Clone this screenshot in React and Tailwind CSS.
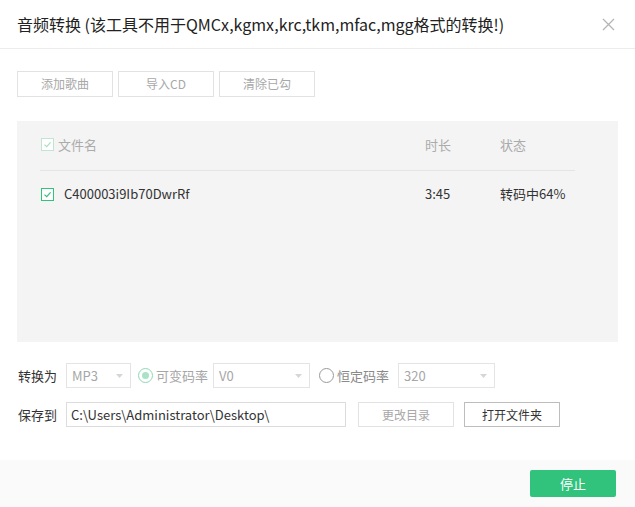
import React, { useState } from 'react';

const font = { fontFamily: '"Noto Sans CJK SC", "Noto Sans", sans-serif' };

const Check = ({ faded }) => (
  <span
    className={`flex h-[13px] w-[13px] items-center justify-center border bg-white ${
      faded ? 'border-[#bfe6d3]' : 'border-[#31c27c]'
    }`}
  >
    <svg width="9" height="9" viewBox="0 0 9 9">
      <path
        d="M1.5 4.6 L3.7 6.6 L7.6 2.4"
        fill="none"
        stroke={faded ? '#a9dfc4' : '#31c27c'}
        strokeWidth="1.2"
      />
    </svg>
  </span>
);

const Select = ({ value, w }) => (
  <div
    className={`flex h-[25px] ${w} items-center justify-between border border-[#e4e4e4] bg-white px-[5px] text-[13px] text-[#a6a6a6]`}
  >
    <span>{value}</span>
    <svg width="7" height="4" viewBox="0 0 7 4" className="mr-[2px]">
      <path d="M0 0 L7 0 L3.5 4 Z" fill="#d6d6d6" />
    </svg>
  </div>
);

const Radio = ({ on, label }) => (
  <label className="flex items-center gap-[3px] text-[13px] text-[#a6a6a6]">
    <span
      className={`flex h-[15px] w-[15px] items-center justify-center rounded-full border ${
        on ? 'border-[#8fd8b5]' : 'border-[#9a9a9a]'
      } bg-white`}
    >
      {on && <span className="h-[7px] w-[7px] rounded-full bg-[#a9e2c6]" />}
    </span>
    <span className={on ? 'text-[#a6a6a6]' : 'text-[#8a8a8a]'}>{label}</span>
  </label>
);

const App = () => {
  const [path] = useState('C:\\Users\\Administrator\\Desktop\\');

  return (
    <div className="flex h-[507px] w-[635px] flex-col bg-white text-[#333]" style={font}>
      <div className="flex h-[49px] items-center justify-between border-b border-[#ececec] pl-[17px] pr-[20px]">
        <h1 className="text-[16px] text-[#222]">
          音频转换 (该工具不用于QMCx,kgmx,krc,tkm,mfac,mgg格式的转换!)
        </h1>
        <svg width="13" height="13" viewBox="0 0 13 13">
          <path d="M1 1 L12 12 M12 1 L1 12" stroke="#b5b5b5" strokeWidth="1.3" />
        </svg>
      </div>

      <div className="flex gap-[5px] pl-[17px] pt-[22px]">
        {['添加歌曲', '导入CD', '清除已勾'].map((t) => (
          <button
            key={t}
            className="h-[26px] w-[96px] border border-[#e2e2e2] bg-white text-[12px] text-[#a8a8a8]"
          >
            {t}
          </button>
        ))}
      </div>

      <div className="mx-[17px] mt-[24px] h-[221px] bg-[#f4f4f4] pl-[23px]">
        <div className="flex h-[50px] w-[535px] items-end border-b border-[#e4e4e4] pb-[16px] text-[13px] text-[#ababab]">
          <div className="flex w-[385px] items-center gap-[4px] pl-[1px]">
            <Check faded />
            <span>文件名</span>
          </div>
          <div className="w-[75px]">时长</div>
          <div>状态</div>
        </div>
        <div className="flex h-[45px] w-[535px] items-center pt-[1px] text-[13px] text-[#333]">
          <div className="flex w-[385px] items-center gap-[10px] pl-[1px]">
            <Check />
            <span>C400003i9Ib70DwrRf</span>
          </div>
          <div className="w-[75px]">3:45</div>
          <div>转码中64%</div>
        </div>
      </div>

      <div className="mt-[21px] flex items-center pl-[18px] text-[13px]">
        <span className="w-[48px] text-[#333]">转换为</span>
        <Select value="MP3" w="w-[65px]" />
        <div className="ml-[7px]">
          <Radio on label="可变码率" />
        </div>
        <div className="ml-[5px]">
          <Select value="V0" w="w-[97px]" />
        </div>
        <div className="ml-[9px]">
          <Radio label="恒定码率" />
        </div>
        <div className="ml-[9px]">
          <Select value="320" w="w-[97px]" />
        </div>
      </div>

      <div className="mt-[14px] flex items-center pl-[18px] text-[13px]">
        <span className="w-[48px] text-[#333]">保存到</span>
        <input
          readOnly
          value={path}
          className="h-[25px] w-[280px] border border-[#dcdcdc] bg-white px-[4px] text-[13px] text-[#333] outline-none"
        />
        <button className="ml-[12px] h-[25px] w-[96px] border border-[#e2e2e2] bg-white text-[12px] text-[#a8a8a8]">
          更改目录
        </button>
        <button className="ml-[10px] h-[25px] w-[96px] border border-[#bdbdbd] bg-white text-[12px] text-[#333]">
          打开文件夹
        </button>
      </div>

      <div className="mt-auto flex h-[47px] items-start justify-end bg-[#fafafa] pr-[19px] pt-[10px]">
        <button className="h-[27px] w-[86px] rounded-[2px] bg-[#31c27c] text-[13px] text-white">
          停止
        </button>
      </div>
    </div>
  );
};

export default App;
